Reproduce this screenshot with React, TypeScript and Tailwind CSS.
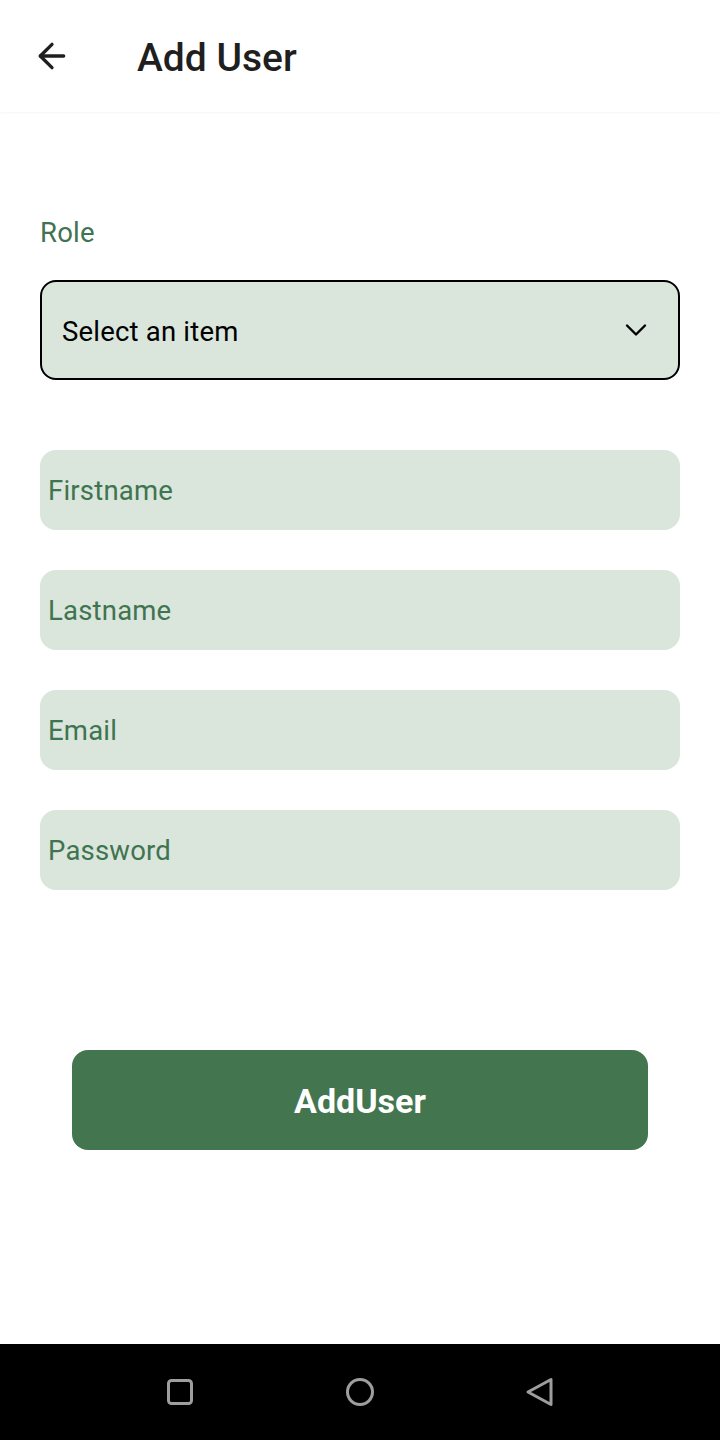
import { ArrowLeft, ChevronDown } from "lucide-react";

const font = { fontFamily: "Roboto, 'Noto Sans', sans-serif" };

function Field({ placeholder }: { placeholder: string }) {
  return (
    <div className="h-[80px] rounded-[16px] bg-[#dae5dc] flex items-center px-2 pt-[2px]">
      <span className="text-[27.5px] tracking-[0.2px] text-[#3f7450]">{placeholder}</span>
    </div>
  );
}

export default function App() {
  return (
    <div className="w-[720px] h-[1440px] bg-white flex flex-col" style={font}>
      <header className="h-[112px] flex items-center bg-white shadow-[0_1px_2px_rgba(0,0,0,0.04)] shrink-0">
        <button className="ml-[30px] w-[44px] h-[44px] flex items-center justify-center text-[#1f1f1f]">
          <ArrowLeft size={40} strokeWidth={2} />
        </button>
        <h1 className="ml-[63px] mt-[4px] text-[39px] font-medium text-[#1f1f1f]">Add User</h1>
      </header>

      <main className="flex-1 px-[40px] pt-[102px]">
        <div className="text-[27.5px] tracking-[0.2px] text-[#3f7450] leading-[36px] pt-[1px]">Role</div>
        <div className="mt-[29px] h-[100px] rounded-[16px] border-2 border-black bg-[#dae5dc] flex items-center justify-between pl-[20px] pr-[24px]">
          <span className="text-[27.5px] tracking-[0.2px] text-black pt-[3px]">Select an item</span>
          <ChevronDown size={36} strokeWidth={1.6} className="text-black" />
        </div>

        <div className="mt-[70px] flex flex-col gap-[40px]">
          <Field placeholder="Firstname" />
          <Field placeholder="Lastname" />
          <Field placeholder="Email" />
          <Field placeholder="Password" />
        </div>

        <div className="mt-[160px] px-[32px]">
          <button className="w-full h-[100px] rounded-[16px] bg-[#43764f] text-white text-[34px] font-bold pt-[2px]">
            AddUser
          </button>
        </div>
      </main>

      <nav className="h-[96px] bg-black flex items-center justify-center gap-[132px] shrink-0">
        <svg width="48" height="48" viewBox="0 0 48 48" fill="none" stroke="#9e9e9e" strokeWidth="3">
          <rect x="12.5" y="12.5" width="23" height="23" rx="3" />
        </svg>
        <svg width="48" height="48" viewBox="0 0 48 48" fill="none" stroke="#9e9e9e" strokeWidth="3">
          <circle cx="24" cy="24" r="12.5" />
        </svg>
        <svg width="48" height="48" viewBox="0 0 48 48" fill="none" stroke="#9e9e9e" strokeWidth="3" strokeLinejoin="round">
          <path d="M12 24 L35 11.5 V36.5 Z" />
        </svg>
      </nav>
    </div>
  );
}
